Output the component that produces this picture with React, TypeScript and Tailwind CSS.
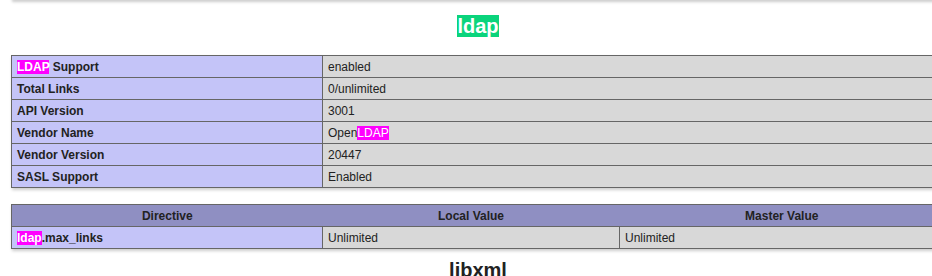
const rows: [React.ReactNode, React.ReactNode][] = [
  [<><Hl>LDAP</Hl> Support</>, "enabled"],
  ["Total Links", "0/unlimited"],
  ["API Version", "3001"],
  ["Vendor Name", <>Open<Hl>LDAP</Hl></>],
  ["Vendor Version", "20447"],
  ["SASL Support", "Enabled"],
];

function Hl({ children }: { children: React.ReactNode }) {
  return <span className="bg-[#ff00ff] text-white">{children}</span>;
}

const td = "border border-[#666] px-[5px] h-[22px] align-middle text-[12px] leading-[14px]";

export default function App() {
  return (
    <div className="w-[932px] h-[276px] overflow-hidden bg-white text-[#222] font-['Liberation_Sans',Arial,sans-serif]">
      <div className="w-[956px]">
        {/* tail of previous table */}
        <div className="mx-auto w-[934px] h-[4px] -mt-[4px] shadow-[1px_2px_3px_#ccc]" />

        <h2 className="mt-[15px] text-center text-[20px] font-bold leading-[23px]">
          <span className="bg-[#0ad47c] text-white">ldap</span>
        </h2>

        <table className="mx-auto mt-[17px] w-[934px] table-fixed border-collapse shadow-[1px_2px_3px_#ccc]">
          <colgroup>
            <col className="w-[311px]" />
            <col />
          </colgroup>
          <tbody>
            {rows.map(([k, v], i) => (
              <tr key={i}>
                <td className={`${td} bg-[#c4c4f8] font-bold`}>{k}</td>
                <td className={`${td} bg-[#d8d8d8]`}>{v}</td>
              </tr>
            ))}
          </tbody>
        </table>

        <table className="mx-auto mt-[16px] w-[934px] table-fixed border-collapse shadow-[1px_2px_3px_#ccc]">
          <colgroup>
            <col className="w-[311px]" />
            <col className="w-[297px]" />
            <col />
          </colgroup>
          <thead>
            <tr className="bg-[#8f8fc2]">
              <th className={`${td} border-r-0 font-bold text-center`}>Directive</th>
              <th className={`${td} border-x-0 font-bold text-center`}>Local Value</th>
              <th className={`${td} border-l-0 font-bold text-center`}>Master Value</th>
            </tr>
          </thead>
          <tbody>
            <tr>
              <td className={`${td} bg-[#c4c4f8] font-bold`}><Hl>ldap</Hl>.max_links</td>
              <td className={`${td} bg-[#d8d8d8]`}>Unlimited</td>
              <td className={`${td} bg-[#d8d8d8]`}>Unlimited</td>
            </tr>
          </tbody>
        </table>

        <h2 className="mt-[10px] text-center text-[20px] font-bold leading-[23px]">libxml</h2>
      </div>
    </div>
  );
}
